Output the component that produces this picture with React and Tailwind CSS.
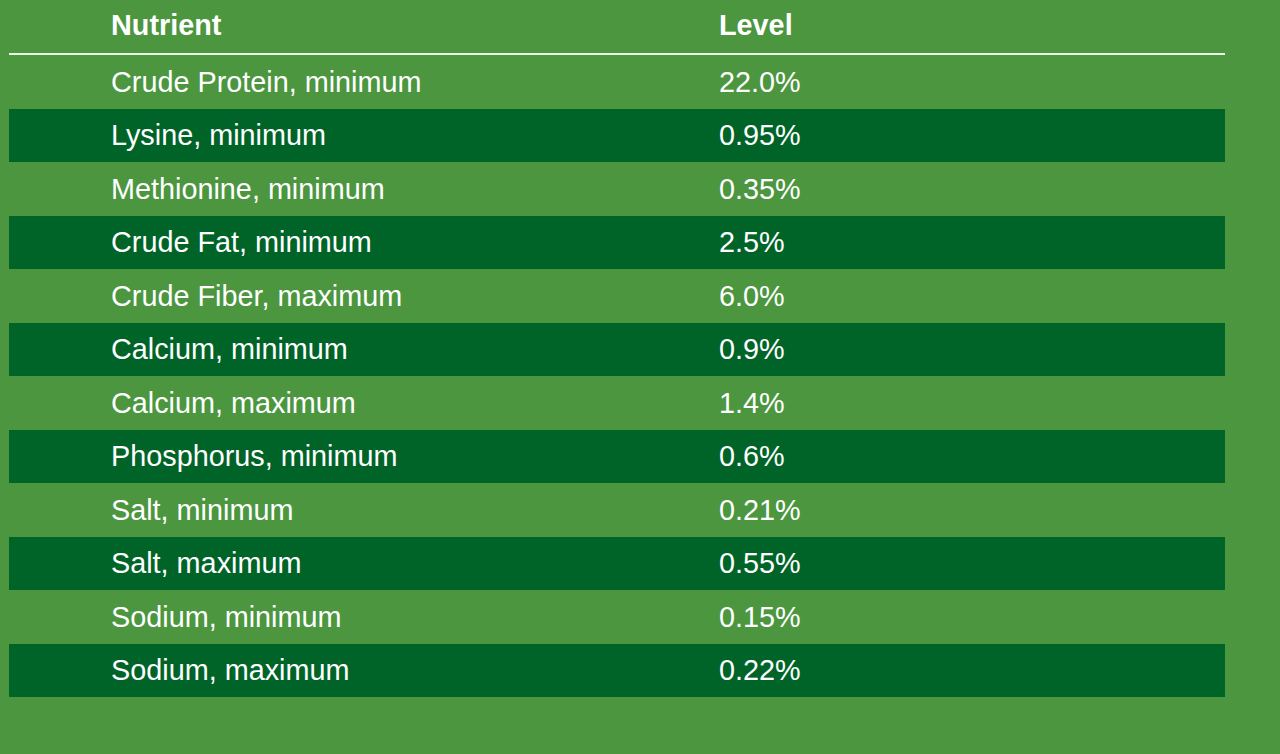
import React from "react";

const rows = [
  ["Crude Protein, minimum", "22.0%"],
  ["Lysine, minimum", "0.95%"],
  ["Methionine, minimum", "0.35%"],
  ["Crude Fat, minimum", "2.5%"],
  ["Crude Fiber, maximum", "6.0%"],
  ["Calcium, minimum", "0.9%"],
  ["Calcium, maximum", "1.4%"],
  ["Phosphorus, minimum", "0.6%"],
  ["Salt, minimum", "0.21%"],
  ["Salt, maximum", "0.55%"],
  ["Sodium, minimum", "0.15%"],
  ["Sodium, maximum", "0.22%"],
];

export default function App() {
  return (
    <div
      className="w-[1280px] h-[754px] bg-[#4b963f] overflow-hidden text-white"
      style={{ fontFamily: '"Liberation Sans", Arial, sans-serif' }}
    >
      <div className="ml-[9px] w-[1216px]">
        <div className="grid grid-cols-2 h-[55px] items-center pb-[2px] border-b-2 border-[#eef8ea] font-bold text-[28.8px] leading-none">
          <div className="pl-[102px]">Nutrient</div>
          <div className="pl-[102px]">Level</div>
        </div>
        {rows.map(([n, v], i) => (
          <div
            key={n}
            className={
              "grid grid-cols-2 items-center h-[53.5px] pt-[1px] text-[28.8px] leading-none " +
              (i % 2 === 1 ? "bg-[#006429]" : "")
            }
          >
            <div className="pl-[102px]">{n}</div>
            <div className="pl-[102px]">{v}</div>
          </div>
        ))}
      </div>
    </div>
  );
}
